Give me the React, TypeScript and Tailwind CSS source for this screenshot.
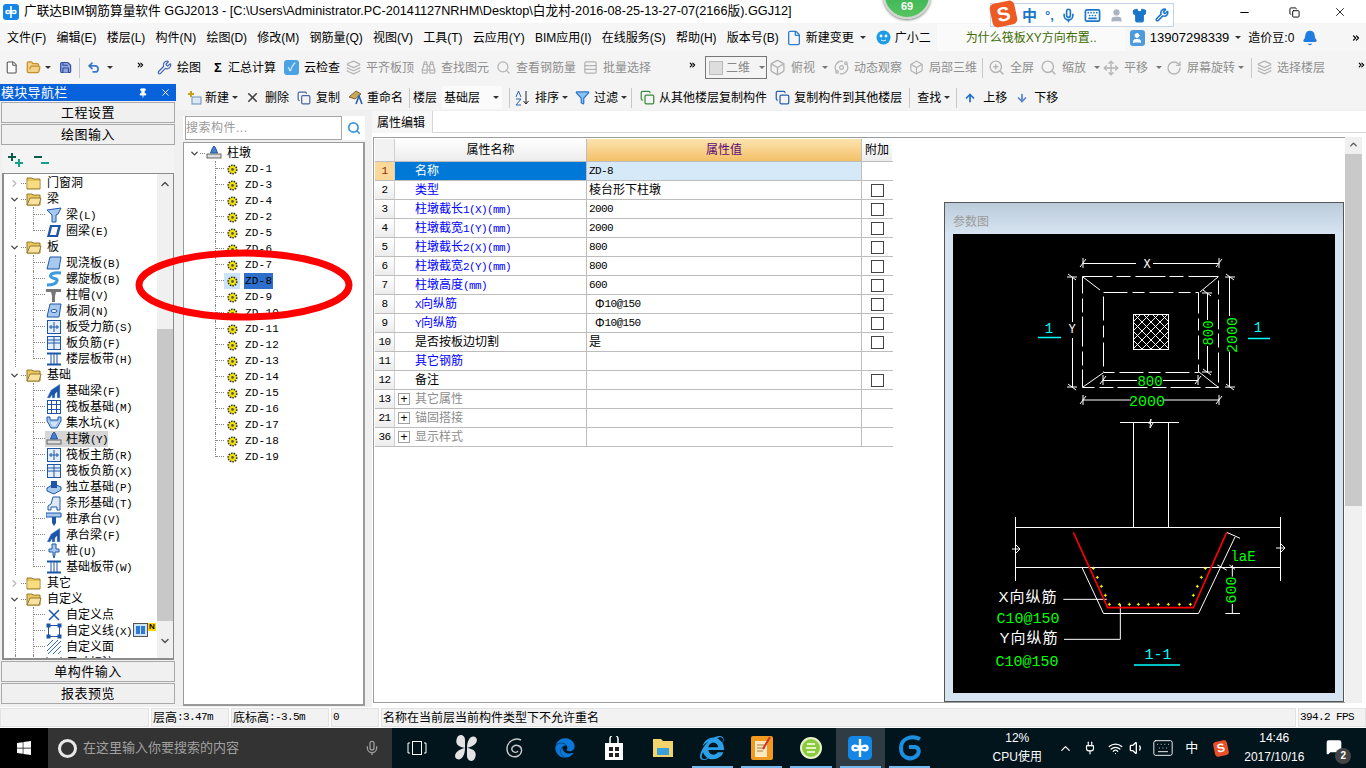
import type { ReactNode } from 'react'
import { FaWindows, FaEdge, FaInternetExplorer } from 'react-icons/fa'
import {
  Binoculars, Bell, Box, ChevronDown, ChevronRight, ChevronUp, ChevronsRight, Copy, File, Filter, FolderOpen,
  Keyboard, Layers, MessageSquare, Mic, Minus, Move, Orbit, Pin, RotateCw, Save, Search, Shirt, Undo2,
  Volume1, Wifi, Wrench, X, ZoomIn, ArrowUp, ArrowDown, User, Plug, Rows3, Copy as CopyDoc
} from 'lucide-react'

const cjk = '"Liberation Sans","Noto Sans CJK SC",sans-serif'

// 中文 12px, 拉丁字符用窄一点的等宽字
function Mix({ text }: { text: string }) {
  return (
    <>
      {text.split(/([\x00-\x7f]+)/).map((part, i) =>
        /^[\x00-\x7f]+$/.test(part) ? (
          <span key={i} className="font-['Liberation_Mono'] text-[11px] tracking-[-0.6px]">{part}</span>
        ) : (
          <span key={i}>{part}</span>
        )
      )}
    </>
  )
}

function Caret({ className = '' }: { className?: string }) {
  return <span className={`inline-block shrink-0 w-0 h-0 border-l-[3px] border-r-[3px] border-t-[3px] border-l-transparent border-r-transparent border-t-[#333] ${className}`} />
}

function Sep({ className = '' }: { className?: string }) {
  return <div className={`w-px h-[20px] shrink-0 bg-[#c8c8c8] ${className}`} />
}

function Tool({ icon, label, className = '', gap = 'gap-[5px]', muted = false }: { icon?: ReactNode; label?: string; className?: string; gap?: string; muted?: boolean }) {
  return (
    <div className={`flex items-center shrink-0 whitespace-nowrap ${gap} ${muted ? 'text-[#8f8f8f]' : 'text-black'} ${className}`}>
      {icon}
      {label && <span>{label}</span>}
    </div>
  )
}

/* ---------- 树图标 ---------- */
function TreeIcon({ kind }: { kind: string }) {
  const d = '#1d56a8'
  const l = '#a8c9ee'
  const art: Record<string, ReactNode> = {
    beam: <path d="M1 3l14-2-3 6-2 1v7H6V8L1 3z" fill={l} stroke={d} />,
    ring: <path d="M4 2h11l-3 12H1L4 2zM6 4l-2 8h6l2-8H6z" fill={d} fillRule="evenodd" />,
    slab: <path d="M4 2h11l-2 12H1L4 2z" fill={l} stroke={d} />,
    spiral: <path d="M15 2C8 1 3 3 5 6c2 2 7 1 6 4-1 3-6 4-10 4" fill="none" stroke="#3d9be0" strokeWidth="3" />,
    cap: <path d="M0 2h15v3H0zM5 5h5l-1 4H6zM6 9h3v6H6z" fill="#777" />,
    hole: <g><path d="M4 1h11l-2 13H1L4 1z" fill={l} stroke={d} /><ellipse cx="8" cy="8" rx="3" ry="1.5" fill="#fff" stroke={d} /></g>,
    bars: <g fill="none" stroke={d}><rect x="1.5" y="1.5" width="13" height="13" fill="#e6f0fb" /><path d="M8 3v10M3 8h10M5 6v4M11 6v4" /></g>,
    grid: <g fill="none" stroke={d}><rect x="1.5" y="1.5" width="13" height="13" fill="#e6f0fb" /><path d="M8 2v12M2 8h12M2 5h12" /></g>,
    band: <g fill="none" stroke={d}><path d="M1 2.5h14M1 13.5h14" strokeWidth="2" /><path d="M5 3v10M8 3v10M11 3v10" /></g>,
    fbeam: <path d="M1 15l4-8 9-6v14h-3V9l-2 2v4H6v-3l-2 3z" fill={d} stroke={l} strokeWidth=".5" />,
    raft: <g fill="none" stroke={d}><rect x="1.5" y="1.5" width="13" height="13" /><path d="M5.5 2v12M10.5 2v12M2 5.5h12M2 10.5h12" /></g>,
    pit: <g><path d="M1 2h3v3h8V2h3v4l-4 7H5L1 6z" fill={l} stroke={d} /><path d="M5 8h6M6 10h4" stroke="#fff" /></g>,
    pier: <g><path d="M6.5 3l1.5-2 1.5 2 2 5h-7z" fill="#4a7fd0" stroke={d} /><rect x="1" y="9" width="14" height="4" fill="#ddd" stroke="#666" /></g>,
    iso: <g><path d="M1 9l7-4 7 3v3l-7 4-7-3z" fill={l} stroke={d} /><path d="M5 2h6v7H5z" fill={d} /></g>,
    strip: <path d="M2 15V11l3-2 2-7h7v13h-3v-3H5v3z" fill="#dfe9f6" stroke={d} />,
    pcap: <g><path d="M0 2h15v4H0z" fill={l} stroke={d} /><path d="M6 6h4v6l-2 3-2-3z" fill={d} /></g>,
    pile: <g><path d="M6 1h4v5h3v3H9v3l-1 3-1-3V9H3V6h3z" fill={l} stroke={d} /></g>,
    point: <path d="M3 3l10 10M13 3L3 13" stroke={d} strokeWidth="1.5" />,
    line: <g fill="none" stroke={d}><rect x="2.5" y="2.5" width="11" height="11" /><g fill={d}><rect x="1" y="1" width="3" height="3" /><rect x="12" y="1" width="3" height="3" /><rect x="1" y="12" width="3" height="3" /><rect x="12" y="12" width="3" height="3" /></g></g>,
    area: <path d="M1 7l6-6M1 12L12 1M2 15L15 2M7 15l8-8M12 15l3-3" stroke="#2f6cc0" fill="none" />,
    dim: <path d="M1 2v6M1 5h14M15 2v6M4 10h8v5H4z" stroke="#444" fill="none" />
  }
  return <svg width="16" height="16" viewBox="0 0 16 16" className="shrink-0">{art[kind]}</svg>
}

function Folder({ open }: { open?: boolean }) {
  return (
    <svg width="16" height="14" viewBox="0 0 16 14" className="shrink-0">
      <path d="M1 2h5l1 1h7v10H1z" fill="#e9c65e" stroke="#9a7a2c" />
      {open ? <path d="M4 6h11l-2 7H1z" fill="#f7e2a0" stroke="#9a7a2c" /> : <path d="M1.5 5h12v7h-12z" fill="#f8dc82" />}
    </svg>
  )
}

type NavItem = { name: string; icon?: string; last?: boolean; sel?: boolean; badge?: boolean; folder?: 'open' | 'closed' }

const navItems: NavItem[] = [
  { name: '门窗洞', folder: 'closed' },
  { name: '梁', folder: 'open' },
  { name: '梁(L)', icon: 'beam' },
  { name: '圈梁(E)', icon: 'ring', last: true },
  { name: '板', folder: 'open' },
  { name: '现浇板(B)', icon: 'slab' },
  { name: '螺旋板(B)', icon: 'spiral' },
  { name: '柱帽(V)', icon: 'cap' },
  { name: '板洞(N)', icon: 'hole' },
  { name: '板受力筋(S)', icon: 'bars' },
  { name: '板负筋(F)', icon: 'grid' },
  { name: '楼层板带(H)', icon: 'band', last: true },
  { name: '基础', folder: 'open' },
  { name: '基础梁(F)', icon: 'fbeam' },
  { name: '筏板基础(M)', icon: 'raft' },
  { name: '集水坑(K)', icon: 'pit' },
  { name: '柱墩(Y)', icon: 'pier', sel: true },
  { name: '筏板主筋(R)', icon: 'bars' },
  { name: '筏板负筋(X)', icon: 'grid' },
  { name: '独立基础(P)', icon: 'iso' },
  { name: '条形基础(T)', icon: 'strip' },
  { name: '桩承台(V)', icon: 'pcap' },
  { name: '承台梁(F)', icon: 'fbeam' },
  { name: '桩(U)', icon: 'pile' },
  { name: '基础板带(W)', icon: 'band', last: true },
  { name: '其它', folder: 'closed' },
  { name: '自定义', folder: 'open' },
  { name: '自定义点', icon: 'point' },
  { name: '自定义线(X)', icon: 'line', badge: true },
  { name: '自定义面', icon: 'area' },
  { name: '尺寸标注(J)', icon: 'dim' }
]

function NavRow({ item }: { item: NavItem }) {
  if (item.folder) {
    return (
      <div className="flex items-center h-[16px]">
        <div className="w-[17px] flex justify-end pr-[1px]">
          {item.folder === 'open'
            ? <ChevronDown size={11} strokeWidth={3} className="text-[#444]" />
            : <ChevronRight size={11} strokeWidth={3} className="text-[#bbb]" />}
        </div>
        <div className="w-[5px] border-b border-dotted border-[#888]" />
        <Folder open={item.folder === 'open'} />
        <span className="ml-[5px]">{item.name}</span>
      </div>
    )
  }
  return (
    <div className="flex items-center h-[16px]">
      <div className="ml-[11px] w-[18px] h-full border-l border-dotted border-[#888]" />
      <div className={`w-[12px] border-l border-dotted border-[#888] ${item.last ? 'h-[8px] self-start' : 'h-full'}`}>
        <div className="h-[8px] border-b border-dotted border-[#888]" />
      </div>
      <div className={`flex items-center h-full pl-[1px] ${item.sel ? 'bg-[#d6d6d6]' : ''}`}>
        <TreeIcon kind={item.icon ?? 'slab'} />
        <span className="ml-[4px] whitespace-nowrap"><Mix text={item.name} /></span>
      </div>
      {item.badge && (
        <div className="flex items-start h-full">
          <div className="w-[15px] h-[14px] ml-[1px] border border-[#555] bg-[#cfe4fa] flex justify-center gap-[1px] py-[2px]">
            <div className="w-[4px] bg-[#2c7bd6]" />
            <div className="w-[4px] bg-[#2c7bd6]" />
          </div>
          <span className="bg-[#ffd400] text-[8px] leading-[8px] font-bold px-[1px]">N</span>
        </div>
      )}
    </div>
  )
}

function NavButton({ label, className = '' }: { label: string; className?: string }) {
  return (
    <div className={`flex items-center justify-center bg-[#f0f0f0] border border-[#a9a9a9] text-[13px] tracking-[0.5px] mx-[1px] ${className}`}>{label}</div>
  )
}

function LeftPanel() {
  return (
    <div className="w-[176px] shrink-0 flex flex-col pt-px">
      <div className="h-[17px] bg-[#0762dc] text-white text-[13px] leading-[17px] pl-px flex items-center tracking-[0.3px]">
        <span>模块导航栏</span>
        <Pin size={10} className="ml-auto mr-[12px] text-white" fill="white" />
        <X size={11} className="mr-[5px] text-white" />
      </div>
      <NavButton label="工程设置" className="h-[21px] mt-[1px]" />
      <NavButton label="绘图输入" className="h-[21px] mt-[1px]" />
      <div className="h-[27px] mt-[1px] mx-[2px] flex items-center gap-[8px] pl-[5px] bg-[#f4f4f4]">
        <svg width="18" height="16" viewBox="0 0 18 16">
          <path d="M5 1v8M1 5h8" stroke="#0b5d4b" strokeWidth="2" />
          <path d="M12 7v8M8 11h8" stroke="#14a08a" strokeWidth="2" />
        </svg>
        <svg width="18" height="16" viewBox="0 0 18 16">
          <path d="M1 5h8" stroke="#0b5d4b" strokeWidth="2" />
          <path d="M8 11h8" stroke="#14a08a" strokeWidth="2" />
        </svg>
      </div>
      <div className="h-[487px] mx-[2px] border border-[#8c8c8c] bg-white flex overflow-hidden border-b-2 border-l-2">
        <div className="flex-1 overflow-hidden text-[12px] pt-[1px]">
          {navItems.map(item => <NavRow key={item.name} item={item} />)}
        </div>
        <div className="w-[16px] shrink-0 bg-[#f0f0f0] flex flex-col items-center">
          <ChevronUp size={12} strokeWidth={3} className="mt-[4px] text-[#555]" />
          <div className="w-full h-[292px] mt-[139px] bg-[#c8c8c8]" />
          <ChevronDown size={12} strokeWidth={3} className="mt-[14px] text-[#555]" />
        </div>
      </div>
      <NavButton label="单构件输入" className="h-[21px] mt-[1px]" />
      <NavButton label="报表预览" className="h-[21px] mt-[1px]" />
    </div>
  )
}

/* ---------- 构件树 ---------- */
const zdNames = ['ZD-1', 'ZD-3', 'ZD-4', 'ZD-2', 'ZD-5', 'ZD-6', 'ZD-7', 'ZD-8', 'ZD-9', 'ZD-10', 'ZD-11', 'ZD-12', 'ZD-13', 'ZD-14', 'ZD-15', 'ZD-16', 'ZD-17', 'ZD-18', 'ZD-19']

function Gear() {
  return (
    <svg width="11" height="11" viewBox="0 0 11 11" className="shrink-0">
      <circle cx="5.5" cy="5.5" r="4.3" fill="#f4e800" stroke="#333" strokeWidth="1.6" strokeDasharray="1.6 1" />
      <circle cx="5.5" cy="5.5" r="1.4" fill="#555" />
    </svg>
  )
}

function ComponentTree() {
  return (
    <div className="w-[182px] shrink-0 ml-[7px] flex flex-col">
      <div className="flex h-[24px] mt-[6px] bg-white">
        <div className="w-[157px] ml-[2px] border border-[#a5a5a5] text-[#999] text-[12px] leading-[22px] tracking-[0.5px]">搜索构件...</div>
        <div className="flex-1 flex items-center justify-center">
          <Search size={14} strokeWidth={3} className="text-[#3d97dc]" />
        </div>
      </div>
      <div className="flex-1 mt-[2px] mb-[1px] border-2 border-[#9a9a9a] border-t border-l bg-white text-[12px] pt-[2px] overflow-hidden">
        <div className="flex items-center h-[16px] pl-[5px]">
          <ChevronDown size={11} strokeWidth={3} className="text-[#444]" />
          <div className="w-[5px] border-b border-dotted border-[#888]" />
          <span className="ml-[1px]"><TreeIcon kind="pier" /></span>
          <span className="ml-[5px]">柱墩</span>
        </div>
        {zdNames.map((name, i) => (
          <div key={name} className="flex items-center h-[16px] pl-[31px]">
            <div className={`w-[9px] border-l border-dotted border-[#888] ${i === zdNames.length - 1 ? 'h-[8px] self-start' : 'h-full'}`}>
              <div className="h-[8px] border-b border-dotted border-[#888]" />
            </div>
            <div className={`w-[16px] h-full flex items-center justify-center ${name === 'ZD-8' ? 'bg-[#cce4f7]' : ''}`}><Gear /></div>
            <span className={`ml-[4px] font-['Liberation_Mono'] text-[11px] tracking-[0.2px] px-[1px] ${name === 'ZD-8' ? 'bg-[#2d6fcb] text-black' : 'text-black'}`}>{name}</span>
          </div>
        ))}
      </div>
    </div>
  )
}

/* ---------- 属性表 ---------- */
type PropRow = { no: number; name: string; value?: string; tone: 'blue' | 'black' | 'gray' | 'sel'; check?: boolean; plus?: boolean }

const props: PropRow[] = [
  { no: 1, name: '名称', value: 'ZD-8', tone: 'sel' },
  { no: 2, name: '类型', value: '棱台形下柱墩', tone: 'blue', check: true },
  { no: 3, name: '柱墩截长1(X)(mm)', value: '2000', tone: 'blue', check: true },
  { no: 4, name: '柱墩截宽1(Y)(mm)', value: '2000', tone: 'blue', check: true },
  { no: 5, name: '柱墩截长2(X)(mm)', value: '800', tone: 'blue', check: true },
  { no: 6, name: '柱墩截宽2(Y)(mm)', value: '800', tone: 'blue', check: true },
  { no: 7, name: '柱墩高度(mm)', value: '600', tone: 'blue', check: true },
  { no: 8, name: 'X向纵筋', value: ' Φ10@150', tone: 'blue', check: true },
  { no: 9, name: 'Y向纵筋', value: ' Φ10@150', tone: 'blue', check: true },
  { no: 10, name: '是否按板边切割', value: '是', tone: 'black', check: true },
  { no: 11, name: '其它钢筋', tone: 'blue' },
  { no: 12, name: '备注', tone: 'black', check: true },
  { no: 13, name: '其它属性', tone: 'gray', plus: true },
  { no: 21, name: '锚固搭接', tone: 'gray', plus: true },
  { no: 36, name: '显示样式', tone: 'gray', plus: true }
]

function PropTable() {
  return (
    <div className="w-[518px] text-[12px] mt-px ml-px">
      <div className="flex h-[23px] border-b border-[#bdbdbd]">
        <div className="w-[20px] bg-[#f2f2f2] border-r border-[#d0d0d0]" />
        <div className="w-[192px] bg-gradient-to-b from-white to-[#ececec] border-r border-[#bdbdbd] flex items-center justify-center">属性名称</div>
        <div className="w-[275px] bg-gradient-to-b from-[#fce3ae] to-[#f3c067] border-r border-[#bdbdbd] flex items-center justify-center text-[#5b0a75]">属性值</div>
        <div className="w-[30px] bg-gradient-to-b from-white to-[#ececec] flex items-center justify-center">附加</div>
      </div>
      {props.map(row => (
        <div key={row.no} className="flex h-[19px] border-b border-[#bdbdbd]">
          <div className={`w-[20px] flex items-center justify-center font-['Liberation_Mono'] text-[11px] tracking-[-0.6px] border-r border-[#d0d0d0] ${row.no === 1 ? 'bg-[#fcd79a] text-[#8c2b00]' : 'bg-gradient-to-b from-white to-[#ececec]'}`}>{row.no}</div>
          <div className={`w-[192px] flex items-center border-r border-[#bdbdbd] ${row.tone === 'sel' ? 'bg-[#0078d7] text-white' : row.tone === 'blue' ? 'text-[#0000ff]' : row.tone === 'gray' ? 'text-[#8d8d8d]' : 'text-black'}`}>
            {row.plus ? (
              <span className="ml-[3px] mr-[5px] w-[12px] h-[12px] border border-[#a0a0a0] flex items-center justify-center text-black text-[12px] leading-none">+</span>
            ) : (
              <span className="w-[20px] shrink-0" />
            )}
            <span className="whitespace-nowrap"><Mix text={row.name} /></span>
          </div>
          <div className={`w-[275px] flex items-center pl-[2px] whitespace-pre border-r border-[#bdbdbd] ${row.tone === 'sel' ? 'bg-[#d6e9f8]' : ''}`}>
            {row.value && <Mix text={row.value} />}
          </div>
          <div className="w-[30px] flex items-center justify-center">
            {row.check && <span className="w-[13px] h-[13px] border border-[#444] bg-white" />}
          </div>
        </div>
      ))}
    </div>
  )
}

function RightPanel() {
  return (
    <div className="flex-1 ml-[7px] mt-px bg-white flex flex-col min-w-0">
      <div className="h-[22px] flex border-b border-[#d8d8d8] bg-white">
        <div className="w-[61px] h-[22px] bg-[#f7f7f7] border-r border-[#d8d8d8] text-[12px] pl-[5px] leading-[24px]">属性编辑</div>
      </div>
      <div className="flex-1 flex mt-[4px] mb-[4px] ml-px">
        <div className="w-[972px] border-l border-t border-[#9d9d9d] border-b bg-white">
          <PropTable />
        </div>
        <div className="w-[17px] bg-[#f0f0f0] flex flex-col items-center">
          <ChevronUp size={11} strokeWidth={3} className="mt-[2px] text-[#555]" />
          <div className="w-full h-[352px] mt-[4px] bg-[#c9c9c9]" />
        </div>
      </div>
    </div>
  )
}

/* ---------- 参数图 ---------- */
function Tick({ x, y }: { x: number; y: number }) {
  return <path d={`M${x - 3} ${y + 4}L${x + 3} ${y - 4}M${x} ${y - 5}V${y + 5}`} stroke="#fff" fill="none" />
}
function TickV({ x, y }: { x: number; y: number }) {
  return <path d={`M${x - 4} ${y - 3}L${x + 4} ${y + 3}M${x - 5} ${y}H${x + 5}`} stroke="#fff" fill="none" />
}

const barsBottom = [508, 538, 568, 595, 625, 655, 685, 718, 751]
const barsSide = [[460, 355], [472, 382], [484, 409], [496, 436], [796, 355], [784, 382], [772, 409], [760, 436]]

function Drawing() {
  const zx = (v: number) => 940 + v / 3
  const zy = (v: number) => 450 + v / 3
  const hatch: string[] = []
  for (let i = -35; i <= 35; i += 9) {
    hatch.push(`M${1133.5 + Math.max(i, 0)} ${314.5 + Math.max(-i, 0)}L${1168.5 + Math.min(i, 0)} ${349.5 + Math.min(-i, 0)}`)
    hatch.push(`M${1168.5 - Math.max(i, 0)} ${314.5 + Math.max(-i, 0)}L${1133.5 - Math.min(i, 0)} ${349.5 + Math.min(-i, 0)}`)
  }
  return (
    <svg viewBox="953 234 382 459" className="w-[382px] h-[459px] block bg-black">
      <g stroke="#fff" fill="none">
        {/* 平面 */}
        <path d="M1082.5 263.5H1136M1153 263.5H1218.5M1072.5 277V322M1072.5 338V387M1229.5 277V316M1229.5 352V387M1207.5 293V320M1207.5 346V372" />
        <path d="M1103 380.5H1137M1163 380.5H1198M1082 400H1131M1163 400H1219" />
        <Tick x={1083} y={263} /><Tick x={1219} y={263} />
        <Tick x={1083} y={400} /><Tick x={1219} y={400} />
        <Tick x={1103} y={380} /><Tick x={1198} y={380} />
        <TickV x={1072} y={277} /><TickV x={1072} y={387} />
        <TickV x={1230} y={277} /><TickV x={1230} y={387} />
        <TickV x={1207} y={293} /><TickV x={1207} y={372} />
        <rect x="1082.5" y="276.5" width="136" height="111" strokeDasharray="30 4 14 5" />
        <rect x="1103.5" y="292.5" width="95" height="80" strokeDasharray="24 5 12 5" />
        <path d="M1083 277L1100 290M1218 277L1200 292M1083 387L1103 373M1218 387L1199 372" />
        <rect x="1133.5" y="314.5" width="35" height="35" />
        <path d={hatch.join('')} />
        {/* 剖面 */}
        <path d="M1120 422.5H1179M1133.5 423V527M1168.5 423V527M1149 424L1151 419L1150 428L1153 423" />
        <path d="M1015.5 527.5H1280.5M1015.5 567.5H1280.5M1015.5 517V581M1280.5 517V581" />
        <path d="M1012 549H1020M1016 545L1020 549L1016 553M1276 548H1285M1281 544L1285 548L1281 552" />
        <path d="M1082 567.5L1103.5 613.5H1198.5L1235 537" />
        <path d={`M${zx(860)} ${zy(247)}L${zx(885)} ${zy(258)}L${zx(900)} ${zy(265)}`} />
        <path d={`M${zx(832)} ${zy(345)}L${zx(860)} ${zy(360)}M${zx(877)} ${zy(345)}V${zy(380)}M${zx(877)} ${zy(462)}V${zy(490)}M${zx(856)} ${zy(490.5)}H${zx(900)}M${zx(868)} ${zy(345)}L${zx(885)} ${zy(358)}`} />
        <path d={`M${zx(370)} ${zy(448)}H${zx(500)}M${zx(372)} ${zy(568)}H${zx(541)}V${zy(463)}`} />
      </g>
      <path d={`M${zx(400)} ${zy(247)}L${zx(503)} ${zy(473)}H${zx(760)}L${zx(860)} ${zy(247)}`} stroke="#ff0000" strokeWidth="1.6" fill="none" />
      <g fill="#ffff00" fontSize="0">
        {barsBottom.map(x => <path key={x} d={`M${zx(x) - 1.5} ${zy(463)}h3M${zx(x)} ${zy(463) - 1.5}v3`} stroke="#ffff00" />)}
        {barsSide.map(([x, y]) => <path key={x} d={`M${zx(x) - 1.5} ${zy(y)}h3M${zx(x)} ${zy(y) - 1.5}v3`} stroke="#ffff00" />)}
      </g>
      <g fontFamily="'Liberation Mono',monospace" textAnchor="middle">
        <text x="1147" y="268" fill="#fff" fontSize="12">X</text>
        <text x="1072" y="333" fill="#fff" fontSize="12">Y</text>
        <text x="1150" y="386" fill="#00ff00" fontSize="14">800</text>
        <text x="1147" y="406" fill="#00ff00" fontSize="15">2000</text>
        <text transform="translate(1213 333) rotate(-90)" fill="#00ff00" fontSize="14">800</text>
        <text transform="translate(1237 335) rotate(-90)" fill="#00ff00" fontSize="15">2000</text>
        <text x="1049" y="333" fill="#00ffff" fontSize="14">1</text>
        <text x="1258" y="332" fill="#00ffff" fontSize="14">1</text>
        <text x="1158" y="659" fill="#00ffff" fontSize="15">1-1</text>
        <text x="1243" y="561" fill="#00ff00" fontSize="14">laE</text>
        <text transform="translate(1236 590) rotate(-90)" fill="#00ff00" fontSize="15">600</text>
        <text x="1028" y="602" fill="#fff" fontSize="15" letterSpacing="1" fontFamily={cjk}>X向纵筋</text>
        <text x="1028" y="623" fill="#00ff00" fontSize="15">C10@150</text>
        <text x="1029" y="643" fill="#fff" fontSize="15" letterSpacing="1" fontFamily={cjk}>Y向纵筋</text>
        <text x="1027" y="666" fill="#00ff00" fontSize="15">C10@150</text>
      </g>
      <path d="M1038 337.5H1061M1248 338.5H1270M1134 665H1180" stroke="#00ffff" strokeWidth="1.6" />
    </svg>
  )
}

function ParamWindow() {
  return (
    <div className="absolute left-[944px] top-[202px] w-[400px] h-[500px] border border-[#555] bg-[#d6e4f2] flex flex-col">
      <div className="h-[31px] shrink-0 bg-gradient-to-b from-[#bccbda] to-[#d6e4f2] pl-[8px] pt-[11px] text-[12px] leading-[16px] text-[#9b9b9b]">参数图</div>
      <div className="ml-[8px] w-[382px] h-[459px] border-r border-b border-[#bbb]"><Drawing /></div>
    </div>
  )
}

/* ---------- 顶部 ---------- */
function AppLogo({ size = 16 }: { size?: number }) {
  return (
    <svg width={size} height={size} viewBox="0 0 16 16" className="shrink-0">
      <rect width="16" height="16" rx="3" fill="#1487e6" />
      <path d="M8 2v12M3 8c0-2 3-2 5 0s5 2 5 0-3-2-5 0-5 2-5 0z" stroke="#fff" strokeWidth="1.6" fill="none" />
    </svg>
  )
}

function TitleBar() {
  return (
    <div className="h-[23px] shrink-0 bg-white flex items-center pl-[3px] pt-px text-[12.7px] whitespace-nowrap">
      <AppLogo />
      <span className="ml-[5px]">广联达BIM钢筋算量软件 GGJ2013 - [C:\Users\Administrator.PC-20141127NRHM\Desktop\白龙村-2016-08-25-13-27-07(2166版).GGJ12]</span>
      <Minus size={13} className="ml-auto" />
      <CopyDoc size={11} className="ml-[38px]" />
      <X size={14} strokeWidth={1.4} className="ml-[33px] mr-[19px]" />
    </div>
  )
}

const menus = ['文件(F)', '编辑(E)', '楼层(L)', '构件(N)', '绘图(D)', '修改(M)', '钢筋量(Q)', '视图(V)', '工具(T)', '云应用(Y)', 'BIM应用(I)', '在线服务(S)', '帮助(H)', '版本号(B)']

function MenuBar() {
  return (
    <div className="h-[28px] shrink-0 bg-[#f6f6f6] flex items-center pl-[7px] pt-px text-[12px] whitespace-nowrap">
      <div className="flex gap-[10.2px]">
        {menus.map(m => <span key={m}>{m}</span>)}
      </div>
      <File size={16} className="ml-[7px] text-[#2f7fd0]" />
      <span className="ml-[4px]">新建变更</span>
      <Caret className="ml-[6px]" />
      <svg width="15" height="15" viewBox="0 0 15 15" className="ml-[10px]">
        <circle cx="7.5" cy="7.5" r="7" fill="#1c9be6" />
        <circle cx="5" cy="6" r="1.4" fill="#fff" />
        <circle cx="10" cy="6" r="1.4" fill="#fff" />
        <path d="M5 10c2 1 3 1 5 0" stroke="#fff" fill="none" />
      </svg>
      <span className="ml-[4px]">广小二</span>
      <div className="ml-[6px] h-full w-[188px] bg-[#fafafa] flex items-center pl-[29px] text-[#3e6b00]">为什么筏板XY方向布置..</div>
      <div className="ml-[5px] w-[15px] h-[16px] rounded-[3px] bg-[#4d9bdc] flex items-center justify-center">
        <User size={12} className="text-white" fill="white" />
      </div>
      <span className="ml-[5px] text-[13px]">13907298339</span>
      <Caret className="ml-[6px]" />
      <span className="ml-[7px]">造价豆:0</span>
      <Bell size={16} className="ml-[8px] text-[#1f7de0]" fill="#1f7de0" />
      <ChevronsRight size={10} strokeWidth={3} className="ml-[33px]" />
    </div>
  )
}

const g = '#b4b4b4'

function ToolbarOne() {
  return (
    <div className="h-[32px] shrink-0 bg-[#f4f4f4] flex items-center pt-px text-[12px]">
      <File size={15} className="ml-[5px] text-[#555]" fill="#fff" />
      <FolderOpen size={17} className="ml-[8px] text-[#c58f2c]" fill="#f2d188" />
      <Caret className="ml-[4px]" />
      <Save size={15} className="ml-[8px] text-[#2d4a9b]" fill="#8fa6df" />
      <Sep className="ml-[6px]" />
      <Undo2 size={15} strokeWidth={3} className="ml-[7px] text-[#3878c8]" />
      <Caret className="ml-[7px]" />
      <ChevronsRight size={10} strokeWidth={3} className="ml-[23px] mb-[6px]" />
      <Tool className="ml-[12px]" icon={<Wrench size={15} className="text-[#4465b8]" />} label="绘图" />
      <Tool className="ml-[13px]" gap="gap-[7px]" icon={<span className="font-bold text-[13px] w-[7px]">Σ</span>} label="汇总计算" />
      <Tool className="ml-[8px]" icon={<span className="w-[15px] h-[15px] rounded-[3px] bg-[#4ba3e3] text-white text-[11px] leading-[15px] text-center">✓</span>} label="云检查" />
      <Tool muted className="ml-[6px]" icon={<Layers size={15} color={g} />} label="平齐板顶" />
      <Tool muted className="ml-[7px]" icon={<Binoculars size={15} color={g} />} label="查找图元" />
      <Tool muted className="ml-[7px]" icon={<Search size={15} color={g} />} label="查看钢筋量" />
      <Tool muted className="ml-[7px]" icon={<Rows3 size={15} color={g} />} label="批量选择" />
      <ChevronsRight size={10} strokeWidth={3} className="ml-[37px] mb-[6px]" />
      <div className="ml-[8px] w-[62px] h-[23px] shrink-0 whitespace-nowrap border border-[#777] flex items-center pl-[3px] text-[#888] gap-[3px]">
        <span className="w-[14px] h-[14px] bg-[#ddd] border border-[#bbb]" />
        <span>二维</span>
        <Caret className="ml-[6px] border-t-[#777]" />
      </div>
      <Tool muted className="ml-[2px]" icon={<Box size={17} color={g} />} label="俯视" />
      <Caret className="ml-[7px] border-t-[#777]" />
      <Tool muted className="ml-[6px]" icon={<Orbit size={15} color={g} />} label="动态观察" />
      <Tool muted className="ml-[7px]" icon={<Box size={15} color={g} />} label="局部三维" />
      <Sep className="ml-[5px]" />
      <Tool muted className="ml-[5px]" icon={<ZoomIn size={17} color={g} />} label="全屏" />
      <Tool muted className="ml-[6px]" icon={<Search size={17} color={g} />} label="缩放" />
      <Caret className="ml-[8px] border-t-[#777]" />
      <Tool muted className="ml-[3px]" icon={<Move size={16} color={g} />} label="平移" />
      <Caret className="ml-[8px] border-t-[#777]" />
      <Tool muted className="ml-[4px]" icon={<RotateCw size={16} color={g} />} label="屏幕旋转" />
      <Caret className="ml-[3px] border-t-[#777]" />
      <Sep className="ml-[7px]" />
      <Tool muted className="ml-[5px]" icon={<Layers size={15} color={g} />} label="选择楼层" />
      <ChevronsRight size={10} strokeWidth={3} className="ml-[32px] mb-[6px]" />
    </div>
  )
}

function ToolbarTwo() {
  return (
    <div className="h-[27px] shrink-0 bg-[#f4f4f4] flex items-center text-[12px] pl-[11px] pt-[2px] whitespace-nowrap">
      <Tool gap="gap-[3px]" icon={
        <svg width="15" height="15" viewBox="0 0 15 15">
          <rect x="5" y="7" width="9" height="7" fill="#dbe8f6" stroke="#6c8fb8" />
          <path d="M4 1v6M1 4h6" stroke="#c9a118" strokeWidth="2" />
        </svg>
      } label="新建" />
      <Caret className="ml-[3px]" />
      <X size={15} strokeWidth={2.6} className="ml-[7px] text-[#444]" />
      <span className="ml-[5px]">删除</span>
      <CopyDoc size={14} className="ml-[8px] text-[#44659f]" />
      <span className="ml-[5px]">复制</span>
      <Tool className="ml-[8px]" gap="gap-[4px]" icon={
        <svg width="15" height="15" viewBox="0 0 15 15">
          <path d="M1 7l7-6 5 3-6 5z" fill="#c9a85a" stroke="#7a6430" />
          <path d="M8 14l3-8 3 8" stroke="#2a5fb0" strokeWidth="1.6" fill="none" />
        </svg>
      } label="重命名" />
      <Sep className="ml-[6px]" />
      <span className="ml-[3px]">楼层</span>
      <div className="ml-[5px] w-[60px] h-[23px] bg-[#fbfbfb] flex items-center pl-[2px]">
        基础层<Caret className="ml-auto mr-[3px]" />
      </div>
      <Sep className="ml-[7px]" />
      <Tool className="ml-[4px]" gap="gap-[5px]" icon={
        <svg width="16" height="16" viewBox="0 0 16 16">
          <path d="M2 7l2.5-6L7 7M2 9h5l-5 6h5" stroke="#2a5fb0" fill="none" />
          <path d="M12 1v13M9.5 11l2.5 3 2.5-3" stroke="#222" fill="none" />
        </svg>
      } label="排序" />
      <Caret className="ml-[3px]" />
      <Filter size={15} className="ml-[7px] text-[#2c76c8]" fill="#8cc2f0" />
      <span className="ml-[4px]">过滤</span>
      <Caret className="ml-[3px]" />
      <Sep className="ml-[4px]" />
      <Tool className="ml-[8px]" gap="gap-[4px]" icon={<Copy size={15} className="text-[#3b8a3e]" />} label="从其他楼层复制构件" />
      <Tool className="ml-[8px]" gap="gap-[4px]" icon={<Copy size={15} className="text-[#2a5fb0]" />} label="复制构件到其他楼层" />
      <Sep className="ml-[7px]" />
      <span className="ml-[7px]">查找</span>
      <Caret className="ml-[3px]" />
      <Sep className="ml-[6px]" />
      <ArrowUp size={12} strokeWidth={3.5} className="ml-[7px] text-[#1f6fd0]" />
      <span className="ml-[7px]">上移</span>
      <ArrowDown size={12} strokeWidth={3.5} className="ml-[9px] text-[#5b83cc]" />
      <span className="ml-[6px]">下移</span>
    </div>
  )
}

/* ---------- 状态栏 / 任务栏 ---------- */
function StatusBar() {
  const cell = 'h-[19px] bg-[#f2f2f2] border border-[#e2e2e2] flex items-center pl-px shrink-0'
  return (
    <div className="h-[21px] shrink-0 bg-white flex items-center gap-[2px] text-[12px]">
      <div className={`${cell} w-[149px]`} />
      <div className={`${cell} w-[78px]`}><Mix text="层高:3.47m" /></div>
      <div className={`${cell} w-[98px]`}><Mix text="底标高:-3.5m" /></div>
      <div className={`${cell} w-[48px]`}><Mix text="0" /></div>
      <div className={`${cell} w-[915px]`}>名称在当前层当前构件类型下不允许重名</div>
      <div className={`${cell} flex-1 shrink`}><Mix text="394.2 FPS" /></div>
    </div>
  )
}

function TaskCell({ children, active, running }: { children: ReactNode; active?: boolean; running?: boolean }) {
  return (
    <div className={`w-[49.3px] h-full shrink-0 flex flex-col items-center justify-center relative ${active ? 'bg-[#2f3c43]' : ''}`}>
      {children}
      {running && <div className="absolute bottom-0 left-[4px] right-[4px] h-[2px] bg-[#76b9ed]" />}
    </div>
  )
}

function Taskbar() {
  return (
    <div className="h-[40px] shrink-0 bg-[#02141c] flex items-center text-white text-[12px]">
      <div className="w-[48px] h-full bg-black flex items-center justify-center">
        <FaWindows size={16} />
      </div>
      <div className="w-[344px] h-full bg-[#333333] flex items-center pl-[10px] text-[#a0a0a0] text-[13px]">
        <span className="w-[19px] h-[19px] rounded-full border-[3px] border-[#e8e8e8]" />
        <span className="ml-[6px]">在这里输入你要搜索的内容</span>
        <Mic size={16} className="ml-auto mr-[12px] text-[#9a9a9a]" />
      </div>
      <TaskCell>
        <svg width="20" height="16" viewBox="0 0 20 16" fill="none" stroke="#fff">
          <rect x="5.5" y="1.5" width="9" height="13" /><path d="M3 3H1v10h2M17 3h2v10h-2" />
        </svg>
      </TaskCell>
      <TaskCell>
        <svg width="22" height="26" viewBox="0 0 22 26" fill="#e3e3e3">
          <path d="M10 13C2 12 0 8 2 3s8-3 8 2zM12 13c0-8 4-13 8-11s2 9-8 11zM12 13c8 1 10 5 8 10s-8 3-8-2zM10 13c0 8-4 13-8 11s-2-9 8-11z" />
        </svg>
      </TaskCell>
      <TaskCell>
        <svg width="20" height="22" viewBox="0 0 20 22" fill="none" stroke="#c9c9c9" strokeWidth="1.4">
          <path d="M16 3C9 0 2 5 2 12s7 9 11 7 5-8 1-10-8 1-7 4 5 3 6 1" />
        </svg>
      </TaskCell>
      <TaskCell><FaEdge size={20} color="#0a78d8" /></TaskCell>
      <TaskCell>
        <svg width="20" height="24" viewBox="0 0 20 24">
          <path d="M1 7h18v17H1z" fill="#fff" />
          <path d="M6 7V3a4 4 0 018 0v4" stroke="#fff" fill="none" strokeWidth="1.5" />
          <path d="M5 11h4v4H5zM11 11h4v4h-4zM5 17h4v4H5zM11 17h4v4h-4z" fill="#222" />
        </svg>
      </TaskCell>
      <TaskCell>
        <svg width="22" height="22" viewBox="0 0 22 22">
          <path d="M1 2h8l2 2h10v16H1z" fill="#f3d36b" />
          <path d="M5 11h12v7H5z" fill="#3aa0dc" />
        </svg>
      </TaskCell>
      <TaskCell running><FaInternetExplorer size={24} color="#2b9fe8" /></TaskCell>
      <TaskCell running>
        <svg width="24" height="26" viewBox="0 0 24 26">
          <rect x="1" y="1" width="22" height="24" rx="2" fill="#f19a1f" />
          <path d="M5 6h12v16H5z" fill="#fbe9c4" />
          <path d="M7 10h8M7 13h8M7 16h6" stroke="#b0782a" />
          <path d="M20 2l-7 12" stroke="#c33" strokeWidth="2" />
        </svg>
      </TaskCell>
      <TaskCell running>
        <svg width="24" height="26" viewBox="0 0 24 26">
          <circle cx="12" cy="13" r="10" fill="#8ecb3b" stroke="#e8f4d0" strokeWidth="2" />
          <path d="M7 13h10M8 9h8M8 17h8" stroke="#fff" strokeWidth="1.6" />
        </svg>
      </TaskCell>
      <TaskCell running active><AppLogo size={24} /></TaskCell>
      <TaskCell running>
        <svg width="24" height="26" viewBox="0 0 24 26" fill="none">
          <path d="M22 4C14 0 3 3 3 13s9 12 14 9 5-9 0-10h-6" stroke="#1b8fe0" strokeWidth="4" />
        </svg>
      </TaskCell>
      <div className="ml-[53px] w-[60px] text-center leading-[19px] shrink-0">12%<br />CPU使用</div>
      <ChevronUp size={15} className="ml-[11px]" />
      <Plug size={14} className="ml-[10px]" />
      <Wifi size={15} className="ml-[11px]" />
      <Volume1 size={16} className="ml-[6px]" />
      <Keyboard size={22} strokeWidth={1} className="ml-[7px]" />
      <span className="ml-[11px] text-[13px]">中</span>
      <span className="ml-[16px] w-[14px] h-[15px] rounded-[3px] bg-[#e8502a] text-white text-[12px] font-bold leading-[15px] text-center -rotate-12">S</span>
      <div className="ml-[12px] w-[68px] text-center leading-[19px] shrink-0 whitespace-nowrap">
        <div>14:46</div>
        <div>2017/10/16</div>
      </div>
      <div className="relative ml-[18px] mt-[-2px]">
        <MessageSquare size={16} fill="#fff" />
        <span className="absolute left-[9px] top-[9px] w-[16px] h-[16px] rounded-full bg-[#444] text-[10px] font-bold leading-[16px] text-center">2</span>
      </div>
    </div>
  )
}

function Overlays() {
  return (
    <>
      <div className="absolute left-[883px] top-[-29px] w-[48px] h-[48px] rounded-full bg-gradient-to-b from-[#1da84e] to-[#56c45f] border-2 border-[#cfd8cf] shadow-[0_1px_3px_#777] flex items-end justify-center pb-[3px] text-white text-[11px] font-bold">69</div>
      <div className="absolute left-[990px] top-[3px] w-[184px] h-[24px] bg-white border border-[#c5d4e6] flex items-center pl-[31px] gap-[8px] text-[#1a76c8]">
        <span className="text-[15px] font-bold leading-none">中</span>
        <span className="text-[13px] font-bold leading-none w-[8px]">°,</span>
        <Mic size={15} strokeWidth={2.6} />
        <Keyboard size={17} strokeWidth={2.4} />
        <User size={15} className="text-[#a8b4c0]" fill="#a8b4c0" />
        <Shirt size={15} fill="#1a76c8" />
        <Wrench size={14} strokeWidth={2.6} />
      </div>
      <div className="absolute left-[991px] top-[2px] w-[25px] h-[24px] rounded-[5px] bg-[#ee5a24] -rotate-12 text-white text-[20px] font-bold leading-[24px] text-center">S</div>
      <svg className="absolute left-[130px] top-[244px] pointer-events-none" width="230" height="82" viewBox="0 0 230 82">
        <ellipse cx="114" cy="41" rx="105" ry="32" fill="none" stroke="#ff0000" strokeWidth="7" />
      </svg>
    </>
  )
}

export default function App() {
  return (
    <div className="relative w-[1366px] h-[768px] overflow-hidden flex flex-col bg-[#f0f0f0] text-black" style={{ fontFamily: cjk }}>
      <TitleBar />
      <MenuBar />
      <ToolbarOne />
      <div className="flex-1 flex min-h-0">
        <LeftPanel />
        <div className="flex-1 flex flex-col min-w-0">
          <ToolbarTwo />
          <div className="flex-1 flex min-h-0">
            <ComponentTree />
            <RightPanel />
          </div>
        </div>
      </div>
      <StatusBar />
      <Taskbar />
      <ParamWindow />
      <Overlays />
    </div>
  )
}
